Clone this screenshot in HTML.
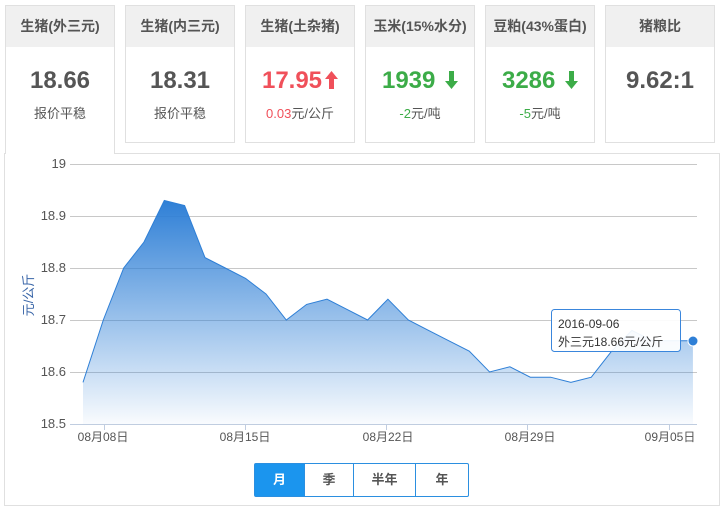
<!DOCTYPE html>
<html><head><meta charset="utf-8"><style>
*{margin:0;padding:0;box-sizing:border-box}
body{width:726px;height:515px;background:#fff;font-family:"Liberation Sans","Noto Sans CJK SC",sans-serif;position:relative;overflow:hidden}
.card{position:absolute;top:5px;width:110px;height:138px;border:1px solid #e0e0e0;background:#fff;text-align:center}
.card .h{height:41px;background:#f0f0f0;line-height:41px;font-size:14px;font-weight:bold;color:#555}
.card .v{margin-top:20px;font-size:24px;font-weight:bold;color:#555;line-height:28px}
.card .s{margin-top:8px;font-size:13px;color:#555}
.red{color:#f0505a!important}.green{color:#3cac48!important}
.ar{display:inline-block;vertical-align:-1px;margin-left:3px}
#panel{position:absolute;left:4px;top:153px;width:716px;height:353px;border:1px solid #e0e0e0}
.btns{position:absolute;top:463px;left:254px;height:34px;display:flex;border:1px solid #2b8fe0;border-radius:2px}
.btns div{height:32px;line-height:32px;text-align:center;font-size:13px;font-weight:bold;color:#555;border-left:1px solid #2b8fe0}
</style></head><body>
<div id="panel"></div>
<div class="card" style="left:5px;height:149px;border-bottom:none"><div class="h">生猪(外三元)</div><div class="v">18.66</div><div class="s">报价平稳</div></div>
<div style="position:absolute;left:6px;top:152px;width:108px;height:3px;background:#fff"></div>
<div class="card" style="left:125px"><div class="h">生猪(内三元)</div><div class="v">18.31</div><div class="s">报价平稳</div></div>
<div class="card" style="left:245px"><div class="h">生猪(土杂猪)</div><div class="v red">17.95<svg class="ar" width="13" height="18" viewBox="0 0 13 18"><path d="M6.5 0L13 8H9V18H4V8H0Z" fill="#f0505a"/></svg></div><div class="s"><span class="red">0.03</span>元/公斤</div></div>
<div class="card" style="left:365px"><div class="h">玉米(15%水分)</div><div class="v green">1939 <svg class="ar" width="13" height="18" viewBox="0 0 13 18"><path d="M6.5 18L13 10H9V0H4V10H0Z" fill="#3cac48"/></svg></div><div class="s"><span class="green">-2</span>元/吨</div></div>
<div class="card" style="left:485px"><div class="h">豆粕(43%蛋白)</div><div class="v green">3286 <svg class="ar" width="13" height="18" viewBox="0 0 13 18"><path d="M6.5 18L13 10H9V0H4V10H0Z" fill="#3cac48"/></svg></div><div class="s"><span class="green">-5</span>元/吨</div></div>
<div class="card" style="left:605px"><div class="h">猪粮比</div><div class="v">9.62:1</div></div>
<svg style="position:absolute;left:0;top:0" width="726" height="515" font-family="Liberation Sans, Noto Sans CJK SC, sans-serif">
<defs><linearGradient id="g" x1="0" y1="200" x2="0" y2="424" gradientUnits="userSpaceOnUse"><stop offset="0" stop-color="#2e7fd6"/><stop offset="1" stop-color="#2e7fd6" stop-opacity="0.03"/></linearGradient></defs>
<g stroke="#c8c8c8" stroke-width="1">
<line x1="70" y1="164.5" x2="697" y2="164.5"/><line x1="70" y1="216.5" x2="697" y2="216.5"/><line x1="70" y1="268.5" x2="697" y2="268.5"/><line x1="70" y1="320.5" x2="697" y2="320.5"/><line x1="70" y1="372.5" x2="697" y2="372.5"/>
</g>
<g id="area"></g>
<line x1="70" y1="424.5" x2="697" y2="424.5" stroke="#c0cde0"/>
<g stroke="#c0cde0"><line x1="245.5" y1="424" x2="245.5" y2="430"/><line x1="386.5" y1="424" x2="386.5" y2="430"/><line x1="527.5" y1="424" x2="527.5" y2="430"/><line x1="669.5" y1="424" x2="669.5" y2="430"/><line x1="104.5" y1="424" x2="104.5" y2="430"/></g>
<g font-size="13" fill="#555" text-anchor="end">
<text x="66" y="168">19</text><text x="66" y="220">18.9</text><text x="66" y="272">18.8</text><text x="66" y="324">18.7</text><text x="66" y="376">18.6</text><text x="66" y="428">18.5</text></g>
<g font-size="12" fill="#555" text-anchor="middle">
<text x="103" y="441">08月08日</text><text x="245" y="441">08月15日</text><text x="388" y="441">08月22日</text><text x="530" y="441">08月29日</text><text x="670" y="441">09月05日</text></g>
<text transform="translate(33,295) rotate(-90)" font-size="13" fill="#3a66a8" text-anchor="middle">元/公斤</text>
<rect x="551.5" y="309.5" width="129" height="42" rx="3" fill="#fff" fill-opacity="0.92" stroke="#3a86dc"/>
<text x="558" y="328" font-size="12" fill="#333">2016-09-06</text>
<text x="558" y="346" font-size="12" fill="#333">外三元18.66元/公斤</text>
<circle cx="693" cy="341" r="5" fill="#2e7fd6" stroke="#fff" stroke-width="1"/>
</svg>
<div class="btns"><div style="width:49px;background:#1b95ee;color:#fff;border-left:none">月</div><div style="width:49px">季</div><div style="width:62px">半年</div><div style="width:53px">年</div></div>
<script>
var v=[18.58,18.70,18.80,18.85,18.93,18.92,18.82,18.80,18.78,18.75,18.70,18.73,18.74,18.72,18.70,18.74,18.70,18.68,18.66,18.64,18.60,18.61,18.59,18.59,18.58,18.59,18.64,18.68,18.66,18.66,18.66];
var p=v.map(function(a,i){return (83+i*20.33).toFixed(1)+","+(424-(a-18.5)*520).toFixed(1)}).join(" ");
document.getElementById("area").innerHTML='<polygon points="83,424 '+p+' 693,424" fill="url(#g)"/><polyline points="'+p+'" fill="none" stroke="#2e7fd6" stroke-width="1"/>';
</script>
</body></html>
